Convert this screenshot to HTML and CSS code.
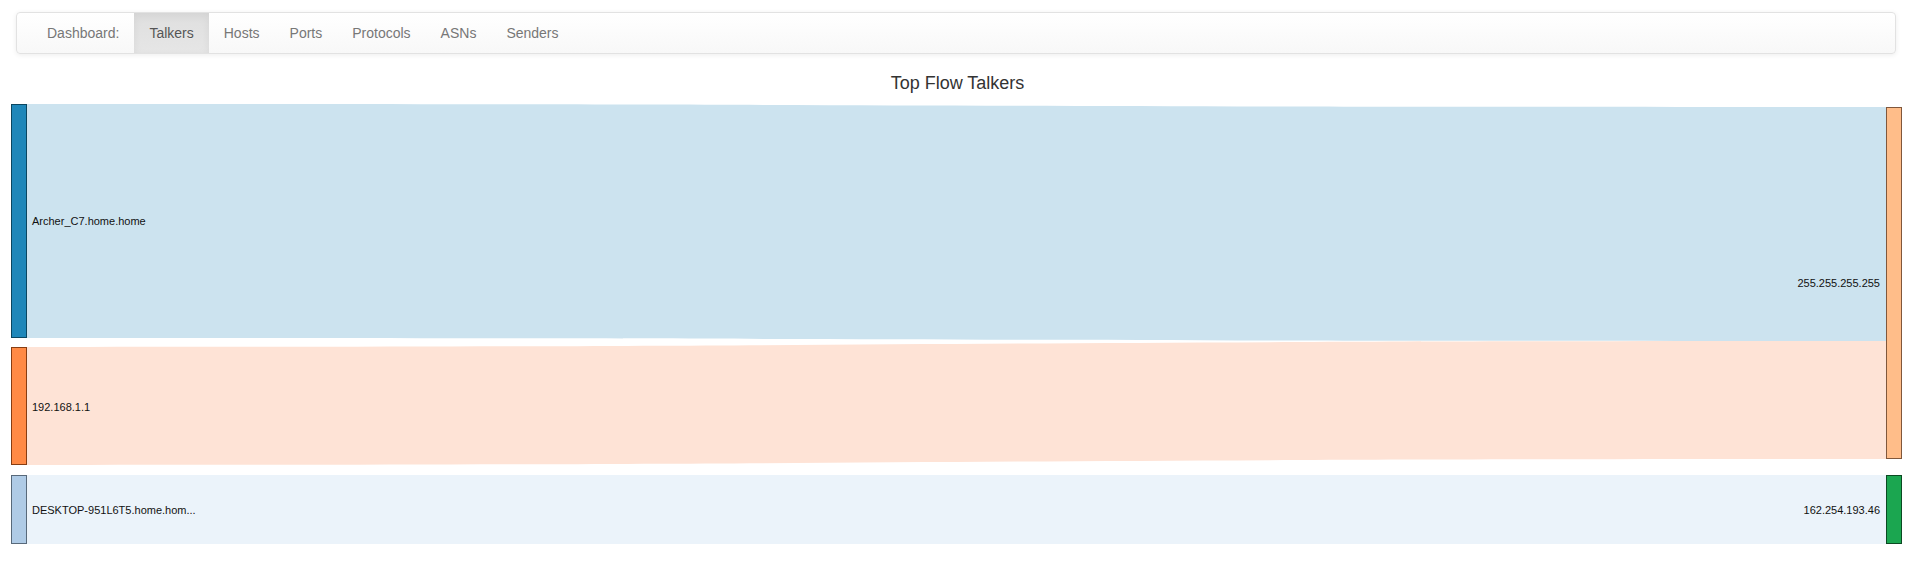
FILE: index.html
```html
<!DOCTYPE html>
<html>
<head>
<meta charset="utf-8">
<title>Top Flow Talkers</title>
<link rel="stylesheet" href="styles.css">
</head>
<body>
<nav class="navbar">
  <ul class="nav">
    <li class="nav-label">Dashboard:</li>
    <li class="nav-item active">Talkers</li>
    <li class="nav-item">Hosts</li>
    <li class="nav-item">Ports</li>
    <li class="nav-item">Protocols</li>
    <li class="nav-item">ASNs</li>
    <li class="nav-item">Senders</li>
  </ul>
</nav>
<h1 class="chart-title">Top Flow Talkers</h1>
<svg class="sankey" width="1915" height="479" viewBox="0 93 1915 479" xmlns="http://www.w3.org/2000/svg">
  <g class="links">
    <path class="link link-blue" d="M27,104 C956.5,104 956.5,107 1886,107 L1886,341 C956.5,341 956.5,338 27,338 Z"/>
    <path class="link link-orange" d="M27,347 C956.5,347 956.5,341 1886,341 L1886,459 C956.5,459 956.5,465 27,465 Z"/>
    <path class="link link-light" d="M27,475 L1886,475 L1886,544 L27,544 Z"/>
  </g>
  <g class="nodes">
    <rect class="node n-archer" x="11.5" y="104.5" width="15" height="233"/>
    <rect class="node n-router" x="11.5" y="347.5" width="15" height="117"/>
    <rect class="node n-desktop" x="11.5" y="475.5" width="15" height="68"/>
    <rect class="node n-bcast" x="1886.5" y="107.5" width="15" height="351"/>
    <rect class="node n-remote" x="1886.5" y="475.5" width="15" height="68"/>
  </g>
  <g class="labels">
    <text x="32" y="221" dy="0.35em">Archer_C7.home.home</text>
    <text x="32" y="407" dy="0.35em">192.168.1.1</text>
    <text x="32" y="510" dy="0.35em">DESKTOP-951L6T5.home.hom...</text>
    <text x="1880" y="283" dy="0.35em" class="end">255.255.255.255</text>
    <text x="1880" y="510" dy="0.35em" class="end">162.254.193.46</text>
  </g>
</svg>
</body>
</html>
```

FILE: styles.css
```css
html, body {
  margin: 0;
  padding: 0;
  background: #fff;
  font-family: "Liberation Sans", Arial, sans-serif;
  font-size: 14px;
  color: #333;
}

.navbar {
  margin: 12px 19px 0 16px;
  border: 1px solid #e2e2e2;
  border-radius: 4px;
  background-image: linear-gradient(to bottom, #ffffff 0%, #f8f8f8 100%);
  box-shadow: inset 0 1px 0 rgba(255,255,255,.15), 0 1px 5px rgba(0,0,0,.075);
  padding: 0 15px;
}

.nav {
  display: flex;
  list-style: none;
  margin: 0;
  padding: 0;
}

.nav-label,
.nav-item {
  padding: 10px 15px;
  line-height: 20px;
  color: #777;
  text-shadow: 0 1px 0 rgba(255,255,255,.25);
}

.nav-item.active {
  color: #555;
  background-image: linear-gradient(to bottom, #dfdfdf 0%, #e6e6e6 100%);
  box-shadow: inset 0 3px 9px rgba(0,0,0,.06);
}

.chart-title {
  margin: 19px 0 0;
  font-size: 18px;
  line-height: 20px;
  font-weight: normal;
  text-align: center;
  color: #333;
}

.sankey {
  display: block;
}

.link-blue { fill: #cce3ef; }
.link-orange { fill: #fee3d6; }
.link-light { fill: #ebf3fa; }

.node { stroke-width: 1; }
.n-archer { fill: #1f87b9; stroke: #0b4660; }
.n-router { fill: #ff8a45; stroke: #873d12; }
.n-desktop { fill: #afcbe6; stroke: #58697a; }
.n-bcast { fill: #ffbd89; stroke: #80573b; }
.n-remote { fill: #1ba650; stroke: #0b4a22; }

.labels text {
  font-family: "Liberation Sans", Arial, sans-serif;
  font-size: 11px;
  fill: #111;
}

.labels text.end {
  text-anchor: end;
}
```
